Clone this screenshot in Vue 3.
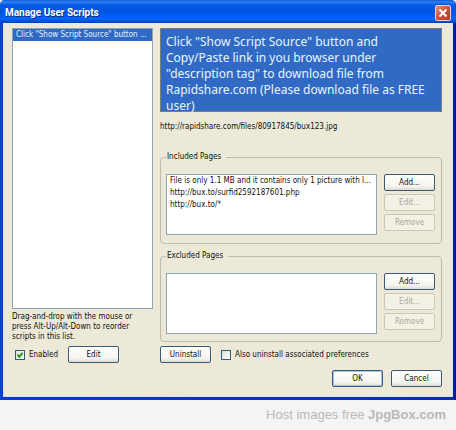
<script setup>
import { ref } from 'vue'

const scripts = ref(['Click "Show Script Source" button ...'])
const selected = ref(0)
const enabled = ref(true)
const removePrefs = ref(false)
const groups = [
  {
    title: 'Included Pages',
    pages: [
      'File is only 1.1 MB and it contains only 1 picture with l...',
      'http://bux.to/surfid2592187601.php',
      'http://bux.to/*',
    ],
  },
  { title: 'Excluded Pages', pages: [] },
]
</script>

<template>
  <main class="page">
    <section class="window" role="dialog" aria-labelledby="window-title">
      <header class="titlebar">
        <h1 id="window-title">Manage User Scripts</h1>
        <button class="close" type="button" aria-label="Close">
          <svg viewBox="0 0 14 14" aria-hidden="true">
            <path d="M3.5 3.5 10.5 10.5M10.5 3.5 3.5 10.5" />
          </svg>
        </button>
      </header>

      <div class="content">
        <div class="left">
          <ul class="listbox scripts" role="listbox" aria-label="User scripts">
            <li
              v-for="(name, i) in scripts"
              :key="name"
              role="option"
              :aria-selected="selected === i"
              :class="{ selected: selected === i }"
              @click="selected = i"
            >{{ name }}</li>
          </ul>
          <p class="hint">Drag-and-drop with the mouse or<br />press Alt-Up/Alt-Down to reorder<br />scripts in this list.</p>
        </div>

        <div class="right">
          <h2 class="banner">Click "Show Script Source" button and<br />Copy/Paste link in you browser under<br />"description tag" to download file from<br />Rapidshare.com (Please download file as FREE<br />user)</h2>
          <p class="description">http://rapidshare.com/files/80917845/bux123.jpg</p>

          <fieldset v-for="group in groups" :key="group.title" class="group">
            <legend>{{ group.title }}</legend>
            <div class="group-body">
              <ul class="listbox pages" role="listbox" :aria-label="group.title">
                <li v-for="page in group.pages" :key="page" role="option" aria-selected="false">{{ page }}</li>
              </ul>
              <div class="group-actions">
                <button class="btn" type="button">Add...</button>
                <button class="btn" type="button" disabled>Edit...</button>
                <button class="btn" type="button" disabled>Remove</button>
              </div>
            </div>
          </fieldset>
        </div>

        <div class="options options-left">
          <label class="check">
            <span class="box">
              <input v-model="enabled" type="checkbox" />
              <svg v-if="enabled" viewBox="0 0 10 10" aria-hidden="true"><path d="M2.5 4.5 4.3 6.8 7.5 3" /></svg>
            </span>
            Enabled
          </label>
          <button class="btn" type="button">Edit</button>
        </div>

        <div class="options options-right">
          <button class="btn" type="button">Uninstall</button>
          <label class="check">
            <span class="box">
              <input v-model="removePrefs" type="checkbox" />
              <svg v-if="removePrefs" viewBox="0 0 10 10" aria-hidden="true"><path d="M2.5 4.5 4.3 6.8 7.5 3" /></svg>
            </span>
            Also uninstall associated preferences
          </label>
        </div>
      </div>

      <footer class="dialog-actions">
        <button class="btn default" type="button">OK</button>
        <button class="btn" type="button">Cancel</button>
      </footer>
    </section>

    <p class="credit">Host images free <strong>JpgBox.com</strong></p>
  </main>
</template>

<style>
body {
  margin: 0;
  background: #f4f4f4;
}
</style>

<style scoped>
.page {
  font-family: "DejaVu Sans Condensed", "Noto Sans", sans-serif;
  font-size: 8px;
  line-height: 12px;
  color: #111;
}

.page * {
  box-sizing: border-box;
}

h1,
h2,
p,
ul {
  margin: 0;
  padding: 0;
}

.window {
  border-radius: 5px 5px 0 0;
  padding: 0 3px 3px;
  background: linear-gradient(90deg, #0a43d8 0, #0a3bcb 3px, #0b2fa8 calc(100% - 3px), #00138c 100%);
}

.titlebar {
  display: flex;
  align-items: center;
  justify-content: space-between;
  height: 23px;
  margin: 0 -3px;
  padding: 3px 5px 0;
  border-radius: 5px 5px 0 0;
  background: linear-gradient(#1559cf 0, #2a83f8 2px, #0458e4 5px, #0054e5 12px, #0064fb 19px, #0050dd 21px, #0040c0 23px);
}

h1 {
  font-family: Roboto, sans-serif;
  font-size: 10px;
  line-height: 16px;
  font-weight: 700;
  color: #fff;
  text-shadow: 1px 1px 0 #0a2f91;
}

.close {
  width: 16px;
  height: 16px;
  padding: 0;
  border: 1px solid #e6cfe0;
  border-radius: 2px;
  background: linear-gradient(135deg, #e3937c, #cf5135 50%, #b83c1e);
}

.close svg {
  display: block;
  width: 14px;
  height: 14px;
  fill: none;
  stroke: #fff;
  stroke-width: 2;
}

.content,
.dialog-actions {
  background: #ece9d8;
  border: 1px solid #d5e0f5;
}

.content {
  display: grid;
  grid-template-columns: minmax(0, 1fr) minmax(0, 2fr);
  gap: 4px 7px;
  padding: 5px 10px 0 8px;
  border-width: 0 1px;
}

.left,
.right {
  display: flex;
  flex-direction: column;
}

.listbox {
  list-style: none;
  background: #fff;
  border: 1px solid #8fa5b5;
}

.listbox li {
  overflow: hidden;
  white-space: nowrap;
}

.scripts {
  flex: 1;
}

.scripts li {
  padding: 0 3px;
}

.selected {
  background: #316ac5;
  color: #e4f0ff;
}

.hint {
  padding: 3px 0 0;
  line-height: 10px;
  white-space: nowrap;
}

.banner {
  height: 84px;
  padding: 5px 5px 0;
  border: 1px solid #7c7f78;
  background: #316ac5;
  color: #e6f6ff;
  font-family: "Noto Sans", sans-serif;
  font-size: 12px;
  line-height: 16px;
  font-weight: 400;
  white-space: nowrap;
}

.description {
  padding: 9px 0 18px;
}

.group {
  min-width: 0;
  margin: 0 0 6px;
  padding: 11px 6px 8px 5px;
  border: 1px solid #bebbab;
  border-radius: 4px;
}

.group:last-child {
  margin-bottom: 0;
  padding-bottom: 7px;
}

.group legend {
  margin: 0;
  padding: 0 5px 0 1px;
}

.group-body {
  display: flex;
  gap: 7px;
}

.pages {
  flex: 1;
  min-width: 0;
  min-height: 61px;
}

.pages li {
  padding: 0 3px;
}

.group-actions {
  display: flex;
  flex-direction: column;
  gap: 3px;
}

.btn {
  width: 51px;
  height: 17px;
  padding: 0;
  border: 1px solid #3c5a75;
  border-radius: 2px;
  background: linear-gradient(#fff, #f5f4ee 75%, #dedbcf);
  font: inherit;
  color: #111;
}

.btn:disabled {
  border-color: #cbc8b8;
  background: #f3f1e6;
  color: #aaa898;
}

.btn.default {
  box-shadow: inset 0 0 0 1px #a5c2f0;
}

.options {
  display: flex;
  align-items: center;
}

.options-left {
  justify-content: space-between;
  padding: 0 34px 0 3px;
}

.options-right {
  gap: 10px;
}

.check {
  display: flex;
  align-items: center;
  gap: 4px;
  white-space: nowrap;
}

.box {
  display: grid;
  width: 10px;
  height: 10px;
}

.box input,
.box svg {
  grid-area: 1 / 1;
  width: 10px;
  height: 10px;
  margin: 0;
}

.box input {
  appearance: none;
  border: 1px solid #315e7c;
  background: linear-gradient(135deg, #dedfd8, #fff);
}

.box svg {
  fill: none;
  stroke: #219a21;
  stroke-width: 2;
  pointer-events: none;
}

.dialog-actions {
  display: flex;
  justify-content: flex-end;
  gap: 8px;
  padding: 7px 10px 9px;
  border-top: 0;
}

.credit {
  padding: 7px 10px 7px 0;
  font-family: "Liberation Sans", sans-serif;
  font-size: 13px;
  line-height: 16px;
  text-align: right;
  color: #b9b9b9;
}
</style>
